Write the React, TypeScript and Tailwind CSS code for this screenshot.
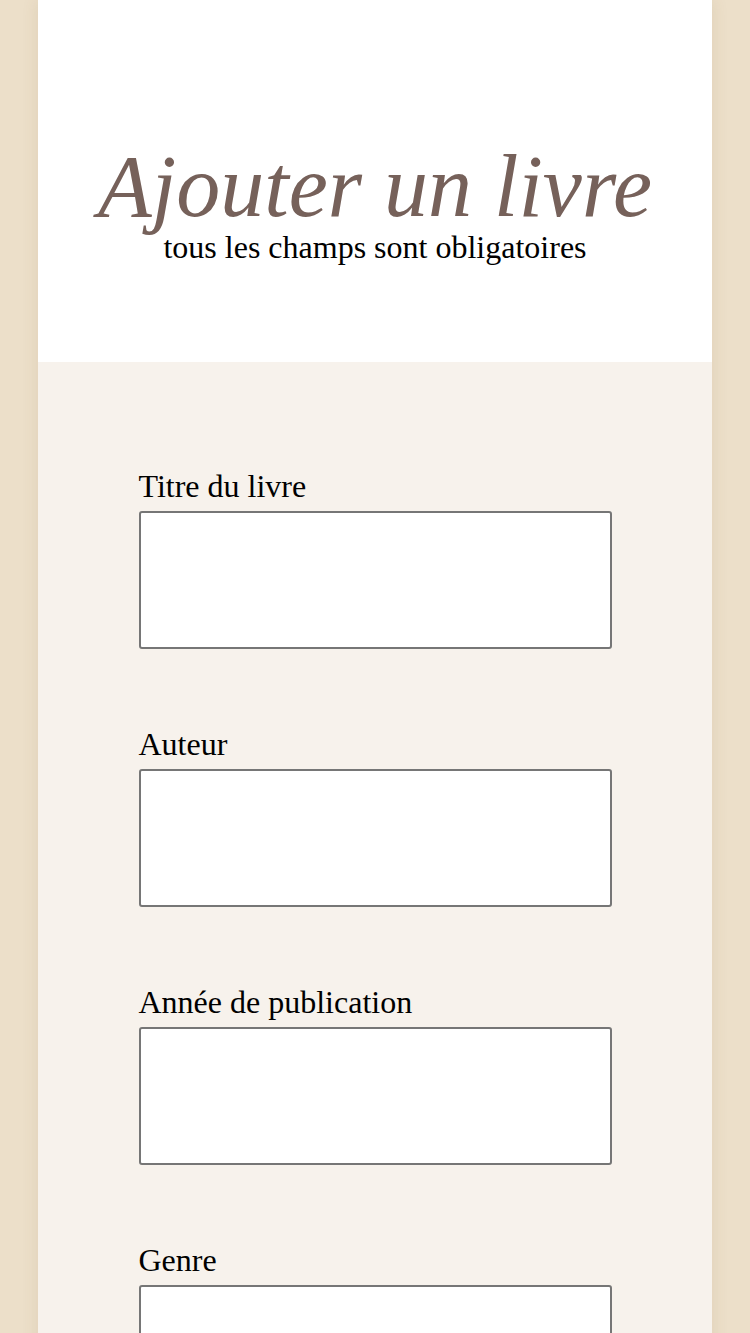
export default function App() {
  const fields = ["Titre du livre", "Auteur", "Année de publication", "Genre"];

  return (
    <div className="min-h-[1333px] bg-[#ecdfc9] font-['Liberation_Serif',serif]">
      <div className="mx-auto w-[674px] min-h-[1333px] bg-[#f7f2ec] shadow-[0_0_16px_rgba(120,90,50,0.12)]">
        {/* Header */}
        <header className="h-[362px] bg-white flex flex-col items-center pt-[143px]">
          <h1 className="italic text-[#76615a] text-[88px] leading-[88px]">Ajouter un livre</h1>
          <p className="text-black text-[32px] leading-[32px]">tous les champs sont obligatoires</p>
        </header>

        {/* Form */}
        <form className="w-[473px] mx-auto pt-[108px] flex flex-col gap-[79px]">
          {fields.map((f) => (
            <label key={f} className="flex flex-col">
              <span className="text-[32px] leading-[32px] text-black">{f}</span>
              <input
                type="text"
                className="mt-[9px] h-[138px] w-full bg-white border-2 border-[#767676] rounded-[3px]"
              />
            </label>
          ))}
        </form>
      </div>
    </div>
  );
}
